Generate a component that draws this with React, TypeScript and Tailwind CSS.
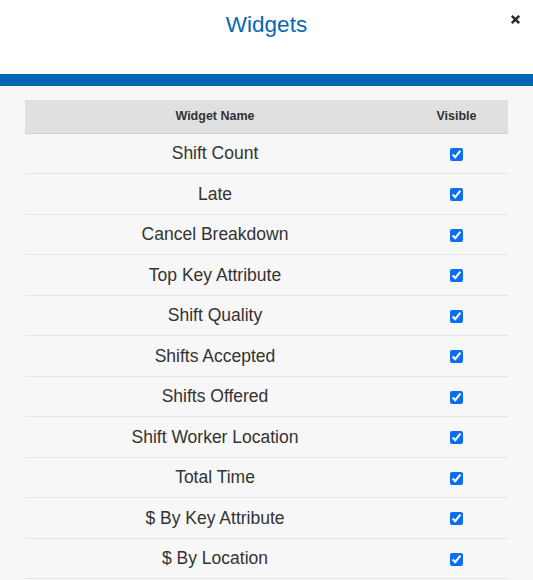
import React from 'react';

const widgets = [
  'Shift Count',
  'Late',
  'Cancel Breakdown',
  'Top Key Attribute',
  'Shift Quality',
  'Shifts Accepted',
  'Shifts Offered',
  'Shift Worker Location',
  'Total Time',
  '$ By Key Attribute',
  '$ By Location',
];

export default function App() {
  return (
    <div className="w-[533px] h-[580px] overflow-hidden bg-[#f7f7f7] font-['Liberation_Sans',Arial,sans-serif] text-[#333]">
      {/* Header */}
      <div className="relative h-[74px] bg-white">
        <h2 className="pt-[10px] text-center text-[22.5px] leading-[30px] text-[#0a67b2]">Widgets</h2>
        <button className="absolute right-[12px] top-[14px] text-[#333]">
          <svg width="11" height="11" viewBox="0 0 12 12">
            <path d="M2 2 L10 10 M10 2 L2 10" stroke="#2b2b2b" strokeWidth="2.8" strokeLinecap="butt" />
          </svg>
        </button>
      </div>
      <div className="h-[12px] bg-[#0066b3]" />

      {/* Table */}
      <div className="px-[25px] pt-[14px]">
        <table className="w-[483px] border-collapse">
          <thead>
            <tr className="h-[33px] bg-[#e0e0e0] border-b border-[#d2d2d2]">
              <th className="text-center text-[12.5px] font-bold">Widget Name</th>
              <th className="w-[103px] text-center text-[12.5px] font-bold">Visible</th>
            </tr>
          </thead>
          <tbody>
            {widgets.map((w) => (
              <tr key={w} className="h-[40.5px] border-b border-[#e6e6e6]">
                <td className="text-center text-[17.5px]">{w}</td>
                <td className="text-center">
                  <input
                    type="checkbox"
                    defaultChecked
                    className="align-middle w-[13px] h-[13px] accent-[#0b6cf4]"
                  />
                </td>
              </tr>
            ))}
          </tbody>
        </table>
      </div>
    </div>
  );
}
